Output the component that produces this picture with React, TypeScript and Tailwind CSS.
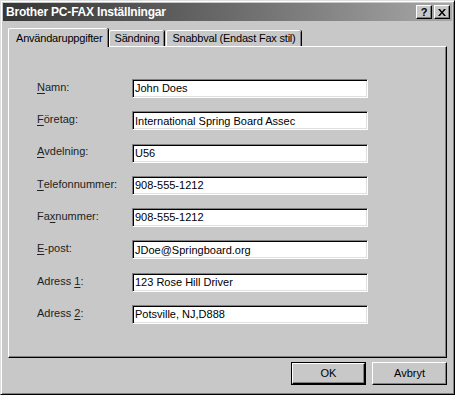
const fields: { pre: string; key: string; post: string; value: string }[] = [
  { pre: "", key: "N", post: "amn:", value: "John Does" },
  { pre: "", key: "F", post: "öretag:", value: "International Spring Board Assec" },
  { pre: "", key: "A", post: "vdelning:", value: "U56" },
  { pre: "", key: "T", post: "elefonnummer:", value: "908-555-1212" },
  { pre: "Fa", key: "x", post: "nummer:", value: "908-555-1212" },
  { pre: "", key: "E", post: "-post:", value: "JDoe@Springboard.org" },
  { pre: "Adress ", key: "1", post: ":", value: "123 Rose Hill Driver" },
  { pre: "Adress ", key: "2", post: ":", value: "Potsville, NJ,D888" },
];

const raised =
  "border border-t-white border-l-white border-r-black border-b-black shadow-[inset_-1px_-1px_0_#808080]";

const tab =
  "flex items-center rounded-t-[2px] border-l border-t border-white text-[11px] tracking-[-0.2px] shadow-[1px_0_0_#000,inset_-1px_0_0_#808080]";

export default function App() {
  return (
    <div
      className="flex h-[395px] w-[455px] flex-col border border-t-[#dfdfdf] border-l-[#dfdfdf] border-r-black border-b-black bg-[#c8c8c8] p-[2px] text-[11px] text-black shadow-[inset_1px_1px_0_#fff,inset_-1px_-1px_0_#808080]"
      style={{ fontFamily: '"Liberation Sans", Arial, sans-serif' }}
    >
      {/* Title bar */}
      <div className="flex h-[18px] items-center justify-between bg-gradient-to-r from-[#363636] via-[#6a6a6a] to-[#a8a8a8] pl-[3px] pr-[2px]">
        <span className="text-[12px] font-bold tracking-[-0.2px] text-white">Brother PC-FAX Inställningar</span>
        <div className="flex gap-[2px]">
          <button className={`flex h-[14px] w-[16px] items-center justify-center bg-[#c8c8c8] text-[11px] font-bold leading-none ${raised}`}>
            ?
          </button>
          <button className={`flex h-[14px] w-[16px] items-center justify-center bg-[#c8c8c8] ${raised}`}>
            <svg width="8" height="7" viewBox="0 0 8 7">
              <path d="M0 0h2l2 2.5L6 0h2L5 3.5 8 7H6L4 4.5 2 7H0l3-3.5z" fill="#000" />
            </svg>
          </button>
        </div>
      </div>

      {/* Tabs */}
      <div className="mt-[7px] flex h-[18px] items-end pl-[5px]">
        <div className={`relative z-10 -mb-px h-[19px] bg-[#c8c8c8] pl-[7px] pr-[5px] ${tab}`}>Användaruppgifter</div>
        <div className={`ml-[1px] h-[16px] px-[5px] ${tab}`}>Sändning</div>
        <div className={`ml-[2px] h-[16px] pl-[5px] pr-[5px] ${tab}`}>Snabbval (Endast Fax stil)</div>
      </div>

      {/* Panel */}
      <div className="mx-[5px] flex h-[312px] flex-col border border-t-white border-l-white border-r-black border-b-black pl-[28px] pt-[32px] shadow-[inset_-1px_-1px_0_#808080]">
        <div className="grid grid-cols-[95px_236px] gap-y-[13.3px]">
          {fields.map((f) => (
            <div key={f.value + f.post} className="contents">
              <div className="flex h-[19px] items-center whitespace-pre pb-[3px] text-[#222]">
                {f.pre}
                <span className="underline underline-offset-[2px]">{f.key}</span>
                {f.post}
              </div>
              <div className="flex h-[19px] items-center border border-t-[#808080] border-l-[#808080] border-r-white border-b-white bg-white pl-[2px] shadow-[inset_1px_1px_0_#000,inset_-1px_-1px_0_#dfdfdf]">
                {f.value}
              </div>
            </div>
          ))}
        </div>
      </div>

      {/* Buttons */}
      <div className="mr-[5px] mt-[4px] flex justify-end gap-[6px]">
        <button className="h-[23px] w-[75px] border border-black bg-[#c8c8c8] p-0">
          <div className={`flex h-full w-full items-center justify-center ${raised}`}>OK</div>
        </button>
        <button className={`flex h-[23px] w-[75px] items-center justify-center bg-[#c8c8c8] ${raised}`}>Avbryt</button>
      </div>
    </div>
  );
}
